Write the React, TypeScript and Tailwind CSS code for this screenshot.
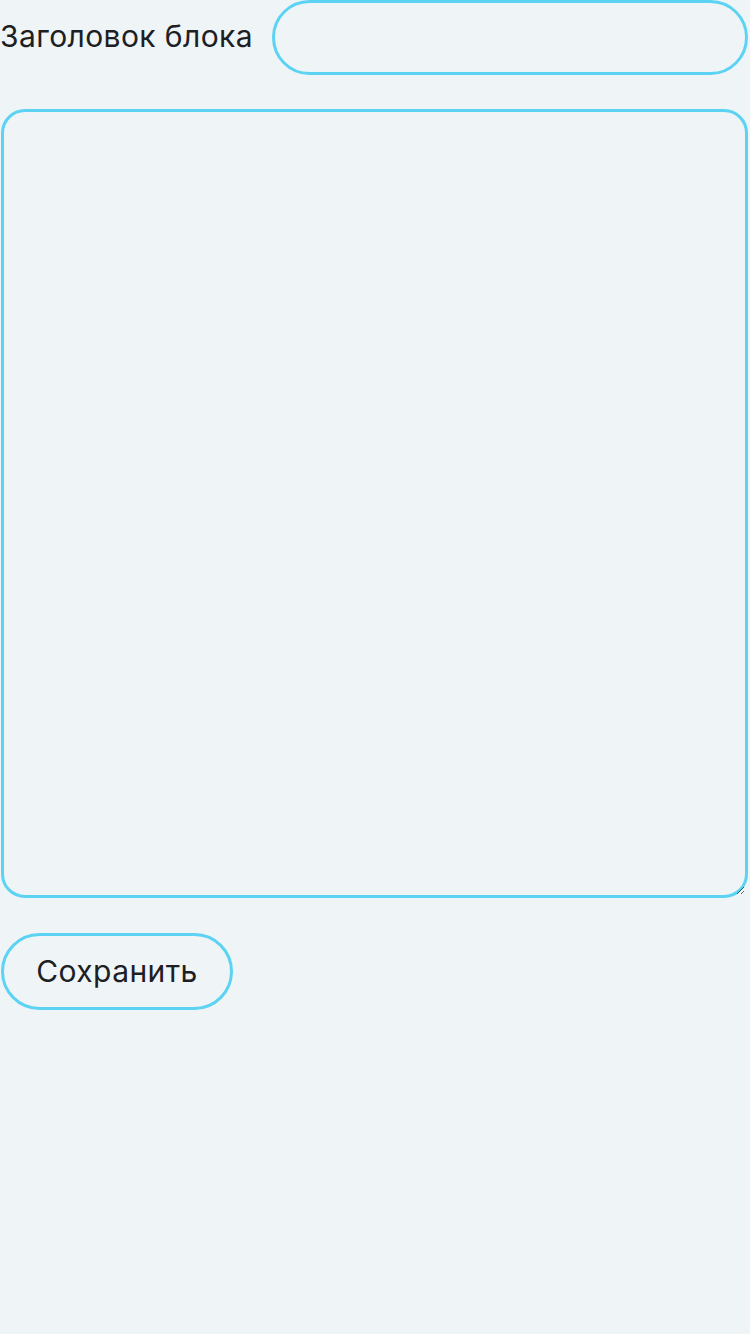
import React from "react";

export default function App() {
  return (
    <div
      className="min-h-[1334px] w-[750px] bg-[#eff4f7] text-[#1d2023]"
      style={{ fontFamily: 'Inter, "Noto Sans", sans-serif' }}
    >
      <div className="flex flex-col pl-[1px] pr-[2px]">
        <div className="flex items-center gap-[19px]">
          <label className="-ml-[1px] whitespace-nowrap pb-[4px] text-[30px] leading-none tracking-[0.4px]">
            Заголовок блока
          </label>
          <input
            type="text"
            className="h-[75px] min-w-0 flex-1 rounded-full border-[3px] border-[#5dd3f3] bg-transparent px-6 text-[30px] outline-none"
          />
        </div>
        <textarea className="mt-[34px] block h-[789px] w-full rounded-[24px] border-[3px] border-[#5dd3f3] bg-transparent p-4 text-[30px] outline-none" />
        <div className="mt-[35px]">
          <button className="h-[77px] w-[232px] rounded-full border-[3px] border-[#5dd3f3] bg-transparent pb-[2px] text-[30px] leading-none tracking-[0.4px]">
            Сохранить
          </button>
        </div>
      </div>
    </div>
  );
}
